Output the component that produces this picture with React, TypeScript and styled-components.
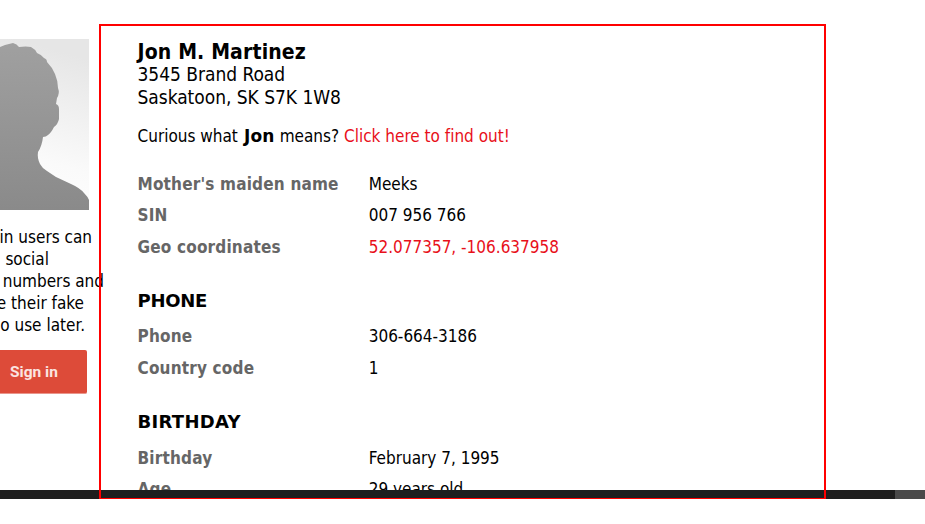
import React from "react";
import styled, { createGlobalStyle } from "styled-components";

const GlobalStyle = createGlobalStyle`
  body {
    margin: 0;
    background: #fff;
    color: #000;
    font: 17px/22px "DejaVu Sans Condensed", "DejaVu Sans", Tahoma, sans-serif;
    font-variant-ligatures: none;
    overflow: hidden;
  }
`;

const Page = styled.div`
  position: relative;
  width: 925px;
  height: 499px;
  overflow: hidden;
  display: flex;
  flex-direction: column;
`;

const Columns = styled.div`
  height: 490px;
  flex: none;
  display: flex;
  overflow: hidden;
`;

const Sidebar = styled.aside`
  width: 137.5px;
  flex: none;
  padding-top: 39px;
`;

const Avatar = styled.svg`
  display: block;
  width: 89px;
  height: 171px;
`;

const Pitch = styled.div`
  margin: 16px 0 14px;
`;

const PitchLine = styled.div<{ $end: number }>`
  display: flex;
  justify-content: flex-end;
  width: ${(p) => p.$end}px;
  height: 22px;
  white-space: nowrap;
`;

const SignIn = styled.button`
  display: block;
  width: 87px;
  height: 44px;
  padding: 2px 0 0 10px;
  border: 0;
  border-bottom: 1px solid #e9958b;
  border-radius: 0 2px 2px 0;
  background: #dd4b39;
  color: #fbe4e1;
  text-align: left;
  font: 700 15.5px/41px Roboto, sans-serif;
`;

const Details = styled.main`
  flex: 1;
  padding-top: 41px;
`;

const Name = styled.h3`
  margin: 0;
  font-size: 21px;
  line-height: 23px;
  height: 22px;
  letter-spacing: 0.15px;
`;

const Address = styled.div`
  font-size: 19px;
  line-height: 23px;
  letter-spacing: -0.03px;
`;

const Meaning = styled.p`
  margin: 16px 0 21.8px;
`;

const FirstName = styled.b`
  margin: 0 0.2px 0 1.2px;
  font-family: "DejaVu Sans", Verdana, sans-serif;
  letter-spacing: 0.2px;
`;

const Link = styled.a`
  color: #e8101a;
  text-decoration: none;
`;

const Heading = styled.h3<{ $spacing: number }>`
  margin: 26.1px 0 8.4px;
  font-family: "DejaVu Sans", Verdana, sans-serif;
  font-size: 18px;
  line-height: 24px;
  letter-spacing: ${(p) => p.$spacing}px;
`;

const Facts = styled.dl`
  margin: 0;
`;

const Fact = styled.div`
  display: grid;
  grid-template-columns: 231.2px 1fr;
  line-height: 31.4px;
  height: 31.4px;
`;

const Label = styled.dt`
  color: #666;
  font-weight: 700;
  letter-spacing: 0.18px;
`;

const Value = styled.dd`
  margin: 0;
`;

const BottomBar = styled.div`
  flex: none;
  height: 9px;
  display: flex;
  justify-content: flex-end;
  background: #1e1e1e;
`;

const BarEnd = styled.div`
  width: 30px;
  background: #4a4a4a;
`;

const Outline = styled.div`
  position: absolute;
  left: 99px;
  top: 24px;
  width: 727px;
  height: 476px;
  box-sizing: border-box;
  border: 2px solid #f00;
  pointer-events: none;
`;

const pitch = [
  { text: "in users can", end: 92 },
  { text: "l social", end: 49 },
  { text: "numbers and", end: 104 },
  { text: "e their fake", end: 84 },
  { text: "o use later.", end: 85 },
];

type Row = [string, React.ReactNode];

function FactList({ rows }: { rows: Row[] }) {
  return (
    <Facts>
      {rows.map(([label, value]) => (
        <Fact key={label}>
          <Label>{label}</Label>
          <Value>{value}</Value>
        </Fact>
      ))}
    </Facts>
  );
}

function Silhouette() {
  return (
    <Avatar viewBox="0 0 89 171">
      <defs>
        <linearGradient id="backdrop" x1="0.2" y1="0" x2="0.05" y2="1">
          <stop offset="0" stopColor="#e6e6e6" />
          <stop offset="0.65" stopColor="#fafafa" />
          <stop offset="1" stopColor="#fff" />
        </linearGradient>
        <linearGradient id="person" x1="0" y1="0" x2="0" y2="1">
          <stop offset="0" stopColor="#a0a0a0" />
          <stop offset="1" stopColor="#8a8a8a" />
        </linearGradient>
      </defs>
      <rect width="89" height="171" fill="url(#backdrop)" />
      <path
        fill="url(#person)"
        d="M0 8 L5 6 Q9 5 13 4 Q17 5 19 8 Q26 7 31 8 Q35 10 37 14 Q42 16 44 19 Q47 20 47 23 Q52 28 55 35 Q58 42 58 49 Q60 54 57 59 L56 65 Q59 66 59 70 L59 80 Q58 85 54 88 Q51 94 48 96 Q46 98 43 98 Q42 107 38 113 Q37 119 40 125 Q42 129 47 132 L56 138 L71 145 Q80 149 84 154 Q88 158 89 161 V171 H0 Z"
      />
    </Avatar>
  );
}

export default function App() {
  return (
    <>
      <GlobalStyle />
      <Page>
        <Columns>
          <Sidebar>
            <Silhouette />
            <Pitch>
              {pitch.map((line) => (
                <PitchLine key={line.text} $end={line.end}>
                  {line.text}
                </PitchLine>
              ))}
            </Pitch>
            <SignIn>Sign in</SignIn>
          </Sidebar>
          <Details>
            <Name>Jon M. Martinez</Name>
            <Address>
              3545 Brand Road
              <br />
              Saskatoon, SK S7K 1W8
            </Address>
            <Meaning>
              Curious what <FirstName>Jon</FirstName> means?{" "}
              <Link>Click here to find out!</Link>
            </Meaning>
            <FactList
              rows={[
                ["Mother's maiden name", "Meeks"],
                ["SIN", "007 956 766"],
                ["Geo coordinates", <Link>52.077357, -106.637958</Link>],
              ]}
            />
            <Heading $spacing={-0.3}>PHONE</Heading>
            <FactList
              rows={[
                ["Phone", "306-664-3186"],
                ["Country code", "1"],
              ]}
            />
            <Heading $spacing={0.3}>BIRTHDAY</Heading>
            <FactList
              rows={[
                ["Birthday", "February 7, 1995"],
                ["Age", "29 years old"],
              ]}
            />
          </Details>
        </Columns>
        <BottomBar>
          <BarEnd />
        </BottomBar>
        <Outline />
      </Page>
    </>
  );
}
